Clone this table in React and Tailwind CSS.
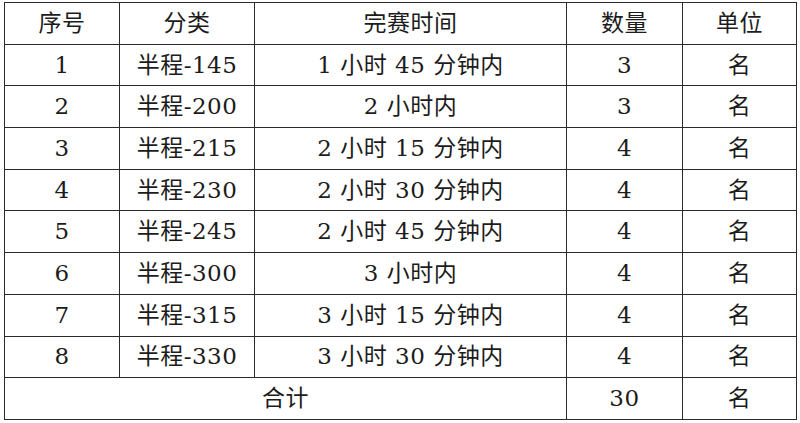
import React from "react";

const rows = [
  ["1", "半程-145", "1 小时 45 分钟内", "3"],
  ["2", "半程-200", "2 小时内", "3"],
  ["3", "半程-215", "2 小时 15 分钟内", "4"],
  ["4", "半程-230", "2 小时 30 分钟内", "4"],
  ["5", "半程-245", "2 小时 45 分钟内", "4"],
  ["6", "半程-300", "3 小时内", "4"],
  ["7", "半程-315", "3 小时 15 分钟内", "4"],
  ["8", "半程-330", "3 小时 30 分钟内", "4"],
];

const font = {
  fontFamily: '"DejaVu Serif", "Noto Sans CJK SC", serif',
};

function Cell({ children, colSpan }) {
  return (
    <td
      colSpan={colSpan}
      className="border border-[#2a2a2a] p-0 text-center align-middle whitespace-pre"
    >
      {children}
    </td>
  );
}

export default function App() {
  return (
    <div className="w-[800px] h-[423px] bg-white overflow-hidden pt-[2px] pl-[4px]">
      <table
        className="border-collapse table-fixed w-[792px] text-[23px] leading-none tracking-[0.5px] text-[#1c1c1c]"
        style={font}
      >
        <colgroup>
          <col className="w-[115px]" />
          <col className="w-[135px]" />
          <col className="w-[312px]" />
          <col className="w-[116px]" />
          <col className="w-[114px]" />
        </colgroup>
        <tbody>
          <tr className="h-[41.7px]">
            <Cell>序号</Cell>
            <Cell>分类</Cell>
            <Cell>完赛时间</Cell>
            <Cell>数量</Cell>
            <Cell>单位</Cell>
          </tr>
          {rows.map((r) => (
            <tr key={r[0]} className="h-[41.7px]">
              <Cell>{r[0]}</Cell>
              <Cell>{r[1]}</Cell>
              <Cell>{r[2]}</Cell>
              <Cell>{r[3]}</Cell>
              <Cell>名</Cell>
            </tr>
          ))}
          <tr className="h-[41.7px]">
            <Cell colSpan={3}>合计</Cell>
            <Cell>30</Cell>
            <Cell>名</Cell>
          </tr>
        </tbody>
      </table>
    </div>
  );
}
